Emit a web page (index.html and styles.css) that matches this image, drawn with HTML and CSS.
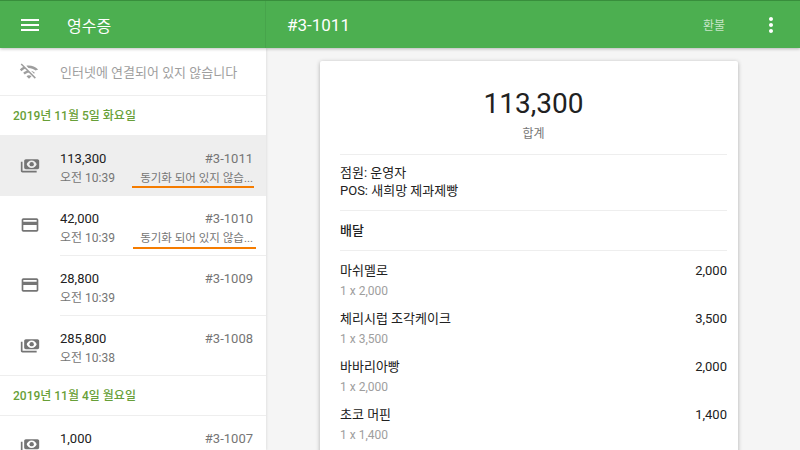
FILE: index.html
```html
<!DOCTYPE html>
<html lang="ko">
<head>
    <meta charset="UTF-8">
    <meta name="viewport" content="width=device-width, initial-scale=1.0">
    <title>영수증</title>
    <link rel="stylesheet" href="styles.css">
</head>
<body>
    <svg class="icon-defs" width="0" height="0">
        <symbol id="icon-cash" viewBox="0 -1 24 24">
            <g transform="translate(24 0) scale(-1 1)">
                <path fill-rule="evenodd" d="M19 14V6c0-1.1-.9-2-2-2H3c-1.1 0-2 .9-2 2v8c0 1.1.9 2 2 2h14c1.1 0 2-.9 2-2zM10 14.5c-3 0-5.500-2.500-6-4.500.5-2 3-4.500 6-4.500s5.500 2.500 6 4.500c-.5 2-3 4.500-6 4.500z"/>
                <circle cx="10" cy="10" r="2.600"/>
                <path d="M23 7v11c0 1.100-.9 2-2 2H4v-2h17V7h2z"/>
            </g>
        </symbol>
        <symbol id="icon-card" viewBox="0 0 24 24">
            <path d="M20 4H4c-1.110 0-1.990.89-1.990 2L2 18c0 1.110.89 2 2 2h16c1.110 0 2-.89 2-2V6c0-1.110-.89-2-2-2zm0 14H4v-6h16v6zm0-10H4V6h16v2z"/>
        </symbol>
    </svg>

    <header class="topbar">
        <div class="topbar-left">
            <svg class="menu-icon" viewBox="0 0 24 24"><path d="M3 18h18v-2H3v2zm0-5h18v-2H3v2zm0-7v2h18V6H3z"/></svg>
            <span class="app-title">영수증</span>
        </div>
        <div class="topbar-right">
            <span class="receipt-title">#3-1011</span>
            <span class="refund">환불</span>
            <svg class="more-icon" viewBox="0 0 24 24"><path d="M12 8c1.100 0 2-.9 2-2s-.9-2-2-2-2 .9-2 2 .9 2 2 2zm0 2c-1.100 0-2 .9-2 2s.9 2 2 2 2-.9 2-2-.9-2-2-2zm0 6c-1.100 0-2 .9-2 2s.9 2 2 2 2-.9 2-2-.9-2-2-2z"/></svg>
        </div>
    </header>

    <div class="layout">
        <aside class="sidebar">
            <div class="offline">
                <svg class="wifi-icon" viewBox="0 0 24 24"><path d="M22.990 9C19.150 5.160 13.800 3.680 8.840 4.540l2.530 2.530c3.030-.01 6.060 1.030 8.500 3.100zm-4 4c-1.290-1.290-2.840-2.130-4.490-2.560l3.530 3.530.96-.97zM2 3.050L5.070 6.100C3.600 6.820 2.220 7.780 1 9l1.990 2c1.240-1.240 2.670-2.160 4.200-2.770l2.240 2.240C7.810 10.890 6.270 11.730 5 13v.01L6.990 15c1.360-1.360 3.140-2.040 4.920-2.060L18.980 20l1.270-1.260L3.290 1.790 2 3.050zM9 17l3 3 3-3c-1.650-1.660-4.340-1.660-6 0z"/></svg>
                <span>인터넷에 연결되어 있지 않습니다</span>
            </div>

            <div class="date-head">2019년 11월 5일 화요일</div>

            <div class="row active">
                <svg class="pay-icon"><use href="#icon-cash"/></svg>
                <div class="row-body">
                    <div class="row-line">
                        <span class="amount">113,300</span>
                        <span class="number">#3-1011</span>
                    </div>
                    <div class="row-line">
                        <span class="time">오전 10:39</span>
                        <span class="unsynced">동기화 되어 있지 않습...</span>
                    </div>
                </div>
            </div>

            <div class="row">
                <svg class="pay-icon"><use href="#icon-card"/></svg>
                <div class="row-body">
                    <div class="row-line">
                        <span class="amount">42,000</span>
                        <span class="number">#3-1010</span>
                    </div>
                    <div class="row-line">
                        <span class="time">오전 10:39</span>
                        <span class="unsynced wide">동기화 되어 있지 않습...</span>
                    </div>
                </div>
            </div>

            <div class="row">
                <svg class="pay-icon"><use href="#icon-card"/></svg>
                <div class="row-body">
                    <div class="row-line">
                        <span class="amount">28,800</span>
                        <span class="number">#3-1009</span>
                    </div>
                    <div class="row-line">
                        <span class="time">오전 10:39</span>
                    </div>
                </div>
            </div>

            <div class="row last">
                <svg class="pay-icon"><use href="#icon-cash"/></svg>
                <div class="row-body">
                    <div class="row-line">
                        <span class="amount">285,800</span>
                        <span class="number">#3-1008</span>
                    </div>
                    <div class="row-line">
                        <span class="time">오전 10:38</span>
                    </div>
                </div>
            </div>

            <div class="date-head">2019년 11월 4일 월요일</div>

            <div class="row">
                <svg class="pay-icon"><use href="#icon-cash"/></svg>
                <div class="row-body">
                    <div class="row-line">
                        <span class="amount">1,000</span>
                        <span class="number">#3-1007</span>
                    </div>
                </div>
            </div>
        </aside>

        <main class="detail">
            <section class="receipt">
                <div class="total">
                    <div class="total-value">113,300</div>
                    <div class="total-label">합계</div>
                </div>
                <div class="staff">
                    <div>점원: 운영자</div>
                    <div>POS: 새희망 제과제빵</div>
                </div>
                <div class="order-type">배달</div>
                <div class="items">
                    <div class="item">
                        <div class="item-line"><span>마쉬멜로</span><span>2,000</span></div>
                        <div class="item-qty">1 x 2,000</div>
                    </div>
                    <div class="item">
                        <div class="item-line"><span>체리시럽 조각케이크</span><span>3,500</span></div>
                        <div class="item-qty">1 x 3,500</div>
                    </div>
                    <div class="item">
                        <div class="item-line"><span>바바리아빵</span><span>2,000</span></div>
                        <div class="item-qty">1 x 2,000</div>
                    </div>
                    <div class="item">
                        <div class="item-line"><span>초코 머핀</span><span>1,400</span></div>
                        <div class="item-qty">1 x 1,400</div>
                    </div>
                </div>
            </section>
        </main>
    </div>
</body>
</html>
```

FILE: styles.css
```css
* {
    box-sizing: border-box;
}

html,
body {
    height: 100%;
}

body {
    margin: 0;
    overflow: hidden;
    font-family: Roboto, "Noto Sans CJK KR", sans-serif;
    font-size: 13px;
    color: #212121;
    background: #f5f5f5;
}

.icon-defs {
    display: block;
    height: 0;
}

.topbar {
    position: relative;
    z-index: 2;
    display: flex;
    height: 48px;
    color: white;
    background: #4caf50;
    border-top: 1px solid #388e3c;
    box-shadow: 0 1px 3px rgba(0,0,0,0.25);
}

.topbar-left {
    display: flex;
    align-items: center;
    width: 266px;
    padding-left: 18px;
    border-right: 1px solid #47a44b;
}

.menu-icon {
    width: 24px;
    height: 24px;
    fill: white;
}

.app-title {
    margin-left: 25px;
    font-size: 16px;
}

.topbar-right {
    display: flex;
    align-items: center;
    flex: 1;
    padding-left: 21px;
}

.receipt-title {
    flex: 1;
    font-size: 17px;
}

.refund {
    margin-right: 34px;
    font-size: 12px;
    color: #c8e6c9;
}

.more-icon {
    width: 24px;
    height: 24px;
    margin-right: 17px;
    fill: white;
}

.layout {
    display: flex;
    height: 402px;
}

.sidebar {
    flex: none;
    width: 266px;
    background: white;
    box-shadow: 1px 0 2px rgba(0,0,0,0.08);
}

.offline {
    display: flex;
    align-items: center;
    height: 48px;
    padding-left: 19px;
    color: #9e9e9e;
    border-bottom: 1px solid #eeeeee;
}

.wifi-icon {
    width: 20px;
    height: 20px;
    margin-right: 21px;
    fill: #9e9e9e;
}

.date-head {
    display: flex;
    align-items: center;
    height: 40px;
    padding: 0 0 2px 13px;
    font-size: 12px;
    font-weight: 500;
    color: #689f38;
    border-bottom: 1px solid #eeeeee;
}

.row {
    display: flex;
    height: 60px;
}

.row.active {
    background: #eeeeee;
}

.pay-icon {
    flex: none;
    width: 20px;
    height: 20px;
    margin: 19px 20px 0 20px;
    fill: #757575;
}

.row-body {
    flex: 1;
    padding: 13px 13px 0 0;
    border-bottom: 1px solid #eeeeee;
}

.row.last .row-body {
    margin-left: -60px;
    padding-left: 60px;
}

.row-line {
    display: flex;
    justify-content: space-between;
    height: 20px;
    line-height: 20px;
}

.row-line + .row-line {
    margin-top: -1px;
}

.amount {
    color: #212121;
}

.number {
    color: #757575;
}

.time {
    color: #757575;
    font-size: 12px;
}

.unsynced {
    position: relative;
    color: #757575;
    font-size: 11.5px;
    white-space: nowrap;
}

/* hand drawn underline on the unsynced labels */
.unsynced::after {
    content: "";
    position: absolute;
    left: -8px;
    right: -1px;
    bottom: 0;
    height: 2px;
    background: #f57c00;
}

.unsynced.wide::after {
    left: -7px;
    right: -3px;
    bottom: -1px;
}

.detail {
    flex: 1;
    padding: 13px 0 0 54px;
    overflow: hidden;
}

.receipt {
    width: 418px;
    min-height: 420px;
    padding: 0 11px 0 20px;
    background: white;
    border-radius: 2px;
    box-shadow: 0 1px 4px rgba(0,0,0,0.3);
}

.total {
    height: 94px;
    padding-top: 25px;
    text-align: center;
    border-bottom: 1px solid #eeeeee;
}

.total-value {
    font-size: 28px;
    line-height: 36px;
    color: #212121;
}

.total-label {
    margin-top: 3px;
    color: #757575;
    font-size: 12px;
    line-height: 18px;
}

.staff {
    height: 56px;
    padding-top: 9px;
    line-height: 18px;
    border-bottom: 1px solid #eeeeee;
}

.order-type {
    height: 40px;
    font-weight: 500;
    line-height: 39px;
    border-bottom: 1px solid #eeeeee;
}

.items {
    padding-top: 10px;
}

.item {
    height: 48px;
}

.item-line {
    display: flex;
    justify-content: space-between;
    line-height: 20px;
}

.item-qty {
    font-size: 12px;
    line-height: 20px;
    color: #9e9e9e;
}
```
